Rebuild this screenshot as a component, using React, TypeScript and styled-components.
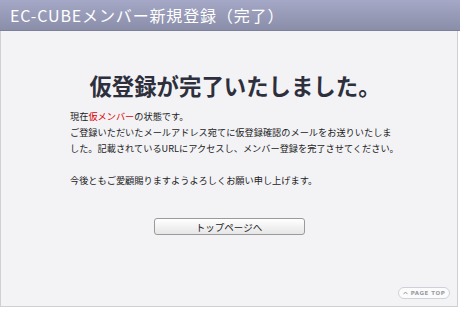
import React from "react";
import styled, { createGlobalStyle } from "styled-components";

const Global = createGlobalStyle`
  html, body { margin: 0; padding: 0; background: #ffffff; }
  body { font-family: "Noto Sans CJK JP", "Noto Sans", sans-serif; }
`;

const Frame = styled.div`
  width: 460px;
  height: 310px;
  display: flex;
  flex-direction: column;
`;

const Header = styled.div`
  height: 31px;
  flex: none;
  background: linear-gradient(#a5a8c6, #8a8ea9);
  border-bottom: 1px solid #7c8099;
  display: flex;
  align-items: center;
  padding-left: 10px;
  box-sizing: border-box;
`;

const Title = styled.h1`
  margin: 0;
  font-size: 16px;
  font-weight: 400;
  color: #ffffff;
  letter-spacing: 0.85px;
  font-family: "Noto Sans CJK JP", sans-serif;
`;

const Panel = styled.div`
  flex: 1;
  margin-right: 2px;
  margin-bottom: 3px;
  border: 1px solid #cfcfd4;
  border-top: none;
  background: #f3f3f6;
  display: flex;
  flex-direction: column;
  align-items: center;
  position: relative;
`;

const Heading = styled.h2`
  margin: 40px 0 0 0;
  padding-left: 12px;
  font-size: 22.4px;
  line-height: 28px;
  font-weight: 700;
  color: #2e2f3c;
  font-family: "Noto Sans CJK JP", sans-serif;
`;

const Message = styled.div`
  margin-top: 9px;
  width: 330px;
  padding-left: 12px;
  font-size: 9.2px;
  line-height: 16px;
  color: #222;
  white-space: nowrap;
  font-family: "Noto Sans CJK JP", sans-serif;
`;

const Para = styled.p`
  margin: 0 0 16px 0;
`;

const Red = styled.span`
  color: #e00000;
`;

const TopButton = styled.button`
  margin-top: 14px;
  width: 151px;
  height: 17px;
  padding: 0;
  border: 1px solid #9a9a9a;
  border-radius: 3px;
  background: linear-gradient(#ffffff, #e6e6e6);
  font-size: 9.5px;
  color: #222;
  font-family: "Noto Sans CJK JP", sans-serif;
  line-height: 14px;
`;

const PageTop = styled.a`
  position: absolute;
  right: 7px;
  bottom: 7px;
  height: 12px;
  width: 52px;
  box-sizing: border-box;
  border: 1px solid #d0d0d8;
  border-radius: 7px;
  background: #fbfbfc;
  display: flex;
  align-items: center;
  justify-content: center;
  gap: 3px;
  font-size: 5.5px;
  font-weight: 700;
  letter-spacing: 0.5px;
  color: #9a9aa6;
  font-family: "DejaVu Sans", sans-serif;
`;

export default function App() {
  return (
    <Frame>
      <Global />
      <Header>
        <Title>EC-CUBEメンバー新規登録（完了）</Title>
      </Header>
      <Panel>
        <Heading>仮登録が完了いたしました。</Heading>
        <Message>
          <Para>
            現在<Red>仮メンバー</Red>の状態です。
            <br />
            ご登録いただいたメールアドレス宛てに仮登録確認のメールをお送りいたしま
            <br />
            した。記載されているURLにアクセスし、メンバー登録を完了させてください。
          </Para>
          <Para>今後ともご愛顧賜りますようよろしくお願い申し上げます。</Para>
        </Message>
        <TopButton>トップページへ</TopButton>
        <PageTop>
          <svg width="5" height="4" viewBox="0 0 5 4">
            <path d="M0.5 3.2 L2.5 1 L4.5 3.2" fill="none" stroke="#9a9aa6" strokeWidth="1" />
          </svg>
          PAGE TOP
        </PageTop>
      </Panel>
    </Frame>
  );
}
